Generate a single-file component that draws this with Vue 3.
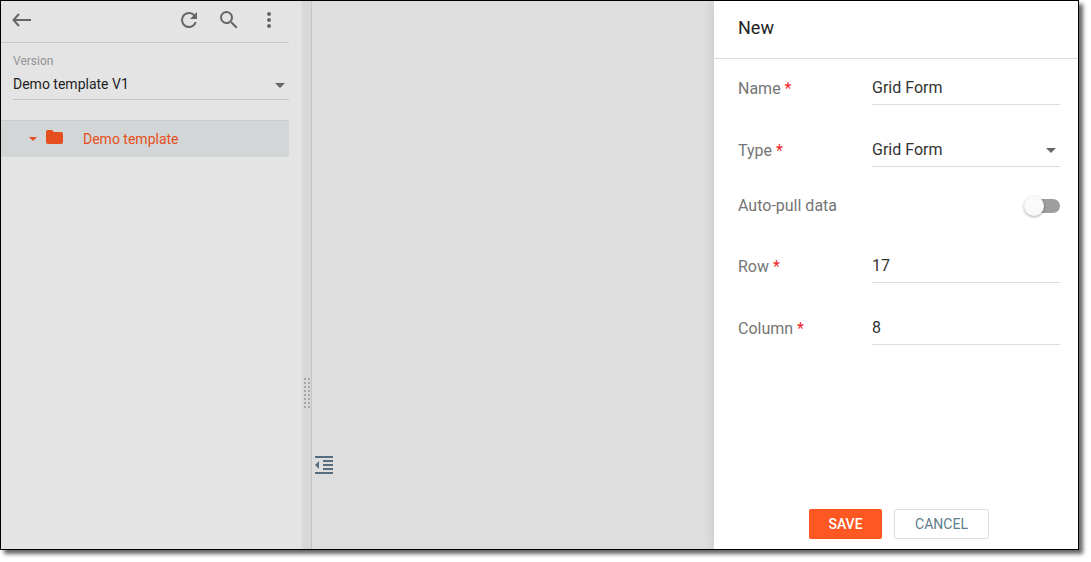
<template>
  <div class="frame">
    <aside class="sidebar">
      <div class="toolbar">
        <button class="icon-btn back" aria-label="Back">
          <svg width="20" height="14" viewBox="0 0 20 14">
            <path d="M8 1L2.500 7l5.500 6M3 7h17" fill="none" stroke="currentColor" stroke-width="2" />
          </svg>
        </button>
        <button class="icon-btn" aria-label="Refresh">
          <svg width="24" height="24" viewBox="0 0 24 24">
            <path
              fill="currentColor"
              d="M17.65 6.35A7.96 7.96 0 0 0 12 4a8 8 0 1 0 7.73 10h-2.08A6 6 0 1 1 12 6c1.66 0 3.14.69 4.22 1.78L13 11h7V4l-2.35 2.35z"
            />
          </svg>
        </button>
        <button class="icon-btn" aria-label="Search">
          <svg width="24" height="24" viewBox="0 0 24 24">
            <path
              fill="currentColor"
              d="M15.5 14h-.79l-.28-.27A6.47 6.47 0 0 0 16 9.5 6.5 6.5 0 1 0 9.5 16c1.61 0 3.09-.59 4.23-1.57l.27.28v.79l5 4.99L20.49 19l-4.99-5zm-6 0a4.5 4.5 0 1 1 0-9 4.5 4.5 0 0 1 0 9z"
            />
          </svg>
        </button>
        <button class="icon-btn" aria-label="More">
          <svg width="24" height="24" viewBox="0 0 24 24">
            <g fill="currentColor">
              <circle cx="12" cy="6" r="2" />
              <circle cx="12" cy="12" r="2" />
              <circle cx="12" cy="18" r="2" />
            </g>
          </svg>
        </button>
      </div>

      <div class="version">
        <label for="version">Version</label>
        <div class="select-wrap">
          <select id="version" v-model="version">
            <option>Demo template V1</option>
          </select>
          <span class="caret"></span>
        </div>
      </div>

      <button class="tree-node" @click="expanded = !expanded">
        <span class="tree-caret" :class="{ collapsed: !expanded }"></span>
        <svg width="18" height="14" viewBox="0 0 18 14">
          <path
            fill="currentColor"
            d="M2 0h4l2 2h7a2 2 0 0 1 2 2v8a2 2 0 0 1-2 2H2a2 2 0 0 1-2-2V2a2 2 0 0 1 2-2z"
          />
        </svg>
        <span class="tree-name">Demo template</span>
      </button>
    </aside>

    <div class="splitter">
      <svg width="6" height="30" viewBox="0 0 6 30">
        <g fill="#a6a6a6">
          <template v-for="n in 8" :key="n">
            <rect x="0" :y="(n - 1) * 4" width="2" height="2" />
            <rect x="4" :y="(n - 1) * 4" width="2" height="2" />
          </template>
        </g>
      </svg>
    </div>

    <main class="canvas">
      <button class="indent-btn" aria-label="Collapse panel">
        <svg width="18" height="18" viewBox="0 0 18 18">
          <path fill="currentColor" d="M0 0h18v2H0zM8 4h10v2H8zM8 8h10v2H8zM8 12h10v2H8zM0 16h18v2H0zM0 9l4-4v8z" />
        </svg>
      </button>
    </main>

    <form class="drawer" @submit.prevent>
      <h2>New</h2>
      <div class="fields">
        <div class="field">
          <label for="name">Name <b>*</b></label>
          <input id="name" v-model="form.name" type="text" />
        </div>
        <div class="field">
          <label for="type">Type <b>*</b></label>
          <div class="select-wrap">
            <select id="type" v-model="form.type">
              <option>Grid Form</option>
            </select>
            <span class="caret"></span>
          </div>
        </div>
        <div class="field toggle">
          <label for="autoPull">Auto-pull data</label>
          <input id="autoPull" v-model="form.autoPull" type="checkbox" class="switch" />
        </div>
        <div class="field">
          <label for="row">Row <b>*</b></label>
          <input id="row" v-model="form.row" type="text" />
        </div>
        <div class="field">
          <label for="column">Column <b>*</b></label>
          <input id="column" v-model="form.column" type="text" />
        </div>
      </div>
      <div class="actions">
        <button type="submit" class="save">SAVE</button>
        <button type="button" class="cancel">CANCEL</button>
      </div>
    </form>
  </div>
</template>

<script setup>
import { reactive, ref } from 'vue'

const version = ref('Demo template V1')
const expanded = ref(true)
const form = reactive({
  name: 'Grid Form',
  type: 'Grid Form',
  autoPull: false,
  row: '17',
  column: '8',
})
</script>

<style>
body {
  background: #fff;
}
</style>

<style scoped>
* {
  box-sizing: border-box;
}

.frame {
  display: flex;
  min-height: calc(100vh - 12px);
  margin: 0 12px 12px 0;
  border: 1px solid #000;
  box-shadow: 4px 4px 4px rgba(0, 0, 0, 0.6);
  background: #dedede;
  font-family: Roboto, 'Liberation Sans', sans-serif;
}

button,
input,
select {
  margin: 0;
  padding: 0;
  border: 0;
  border-radius: 0;
  background: none;
  font-family: inherit;
  outline: none;
}

button,
select {
  cursor: pointer;
}

svg {
  display: block;
}

.sidebar {
  flex: 0 0 300px;
  padding-right: 12px;
  background: #e4e4e4;
}

.toolbar {
  display: flex;
  align-items: center;
  gap: 16px;
  height: 42px;
  padding: 0 8px 4px 10px;
  border-bottom: 1px solid #c8c8c8;
}

.icon-btn {
  color: #666;
}

.back {
  margin-right: auto;
}

.version {
  padding: 10px 0 0 12px;
}

.version label {
  display: block;
  color: #939393;
  font-size: 12px;
  line-height: 16px;
}

.select-wrap {
  position: relative;
  flex: 1;
}

select {
  display: block;
  appearance: none;
  width: 100%;
}

.version select {
  height: 31px;
  border-bottom: 1px solid #c4c4c4;
  color: #1e1e1e;
  font-size: 14px;
}

.caret {
  position: absolute;
  top: 14px;
  right: 4px;
  border: 5px solid transparent;
  border-top-color: #666;
  border-bottom: 0;
  pointer-events: none;
}

.tree-node {
  display: flex;
  align-items: center;
  width: 100%;
  height: 37px;
  margin-top: 20px;
  padding-left: 28px;
  border-top: 1px solid #c8cbcb;
  background: #d2d6d6;
  color: #e64f20;
  font-size: 14px;
}

.tree-caret {
  margin-right: 9px;
  border: 4px solid transparent;
  border-top-color: currentColor;
  border-bottom: 0;
}

.tree-caret.collapsed {
  transform: rotate(-90deg);
}

.tree-node svg {
  margin-bottom: 4px;
}

.tree-name {
  margin-left: 19px;
}

.splitter {
  display: flex;
  flex: 0 0 11px;
  align-items: flex-end;
  padding: 0 0 141px 1px;
  border-left: 2px solid #dedede;
  border-right: 1px solid #c6c6c6;
  background: #d8d8d8;
}

.canvas {
  display: flex;
  flex: 1;
  align-items: flex-end;
  padding: 0 0 75px 3px;
}

.indent-btn {
  color: #546e7f;
}

.drawer {
  display: flex;
  flex: 0 0 364px;
  flex-direction: column;
  min-width: 0;
  background: #fff;
  box-shadow: 0 0 10px rgba(0, 0, 0, 0.12);
  clip-path: inset(0 0 0 -12px);
}

h2 {
  height: 58px;
  margin: 0;
  padding: 0 24px 4px;
  border-bottom: 1px solid #ddd;
  color: #222;
  font-size: 18px;
  font-weight: 400;
  line-height: 53px;
}

.fields {
  display: flex;
  flex: 1;
  flex-direction: column;
  gap: 29px;
  padding: 13px 18px 24px 24px;
}

.field {
  display: flex;
  align-items: center;
}

.field label {
  flex: 0 0 134px;
  color: #757575;
  font-size: 16px;
  line-height: 19px;
}

.field b {
  color: #f0282d;
  font-weight: 400;
}

.field input[type='text'],
.field select {
  flex: 1;
  min-width: 0;
  height: 33px;
  padding-bottom: 2px;
  border-bottom: 1px solid #ddd;
  color: #333;
  font-size: 16px;
}

.toggle {
  justify-content: space-between;
  padding-bottom: 6px;
}

.switch {
  appearance: none;
  position: relative;
  width: 34px;
  height: 14px;
  border-radius: 7px;
  background: #9e9e9e;
  cursor: pointer;
}

.switch::before {
  content: '';
  position: absolute;
  top: -3px;
  left: -2px;
  width: 20px;
  height: 20px;
  border-radius: 50%;
  background: #fafafa;
  box-shadow: 0 1px 3px rgba(0, 0, 0, 0.35);
}

.switch:checked::before {
  left: 16px;
}

.actions {
  display: flex;
  justify-content: center;
  gap: 12px;
  padding: 0 18px 10px 24px;
}

.actions button {
  height: 30px;
  border-radius: 2px;
  font-size: 14px;
}

.actions .save {
  width: 73px;
  background: #ff5722;
  color: #fff;
  font-weight: 500;
}

.actions .cancel {
  width: 95px;
  border: 1px solid #ddd;
  color: #607d8b;
}
</style>
